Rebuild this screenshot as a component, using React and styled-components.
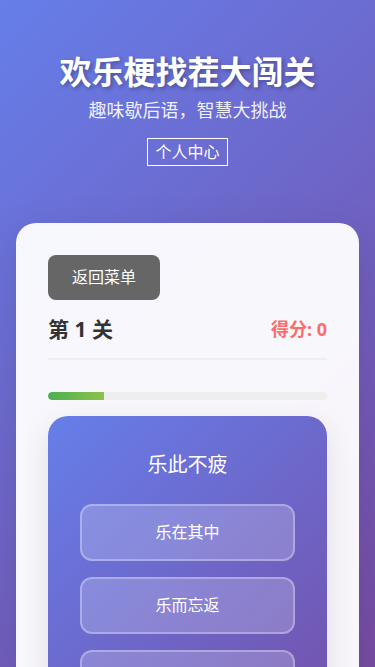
import React, { useState } from "react";
import styled, { createGlobalStyle } from "styled-components";

const GlobalStyle = createGlobalStyle`
  * { box-sizing: border-box; }
  html, body { margin: 0; padding: 0; }
  body {
    min-height: 100vh;
    font-family: "Noto Sans", "Noto Sans CJK SC", sans-serif;
    background: linear-gradient(135deg, #667eea 0%, #764ba2 100%);
    background-attachment: fixed;
  }
`;

const Page = styled.div`
  min-height: 100vh;
  padding: 0 16px 32px;
`;

const Header = styled.header`
  display: flex;
  flex-direction: column;
  align-items: center;
  padding-top: 52px;
  color: #fff;
  text-align: center;
`;

const Title = styled.h1`
  margin: 0;
  font-size: 32px;
  line-height: 40px;
  font-weight: 700;
  text-shadow: 2px 2px 4px rgba(0, 0, 0, 0.3);
`;

const Subtitle = styled.p`
  margin: 6px 0 0;
  font-size: 18px;
  line-height: 24px;
  opacity: 0.9;
`;

const ProfileButton = styled.button`
  margin-top: 16px;
  padding: 3px 7px;
  font-family: inherit;
  font-size: 16px;
  line-height: 20px;
  color: #fff;
  background: transparent;
  border: 1px solid #fff;
  cursor: pointer;
`;

const Card = styled.main`
  margin-top: 57px;
  padding: 32px;
  background: rgba(255, 255, 255, 0.95);
  border-radius: 20px;
  box-shadow: 0 10px 40px rgba(0, 0, 0, 0.1);
`;

const BackButton = styled.button`
  display: block;
  padding: 12px 24px;
  font-family: inherit;
  font-size: 16px;
  line-height: 21px;
  color: #fff;
  background: #666;
  border: none;
  border-radius: 8px;
  cursor: pointer;
`;

const InfoRow = styled.div`
  display: flex;
  justify-content: space-between;
  align-items: center;
  margin-top: 17px;
  padding-bottom: 17px;
  border-bottom: 2px solid #eee;
  line-height: 24px;
  font-weight: 700;
`;

const Level = styled.span`
  color: #333;
  font-size: 21px;
`;

const Score = styled.span`
  color: #ff6b6b;
  font-size: 18px;
`;

const Track = styled.div`
  margin-top: 32px;
  height: 8px;
  background: #eee;
  border-radius: 4px;
  overflow: hidden;
`;

const Fill = styled.div`
  height: 100%;
  background: linear-gradient(90deg, #4caf50, #8bc34a);
  border-radius: 4px 0 0 4px;
`;

const Question = styled.section`
  margin-top: 16px;
  padding: 32px;
  background: linear-gradient(135deg, #667eea 0%, #764ba2 100%);
  border-radius: 20px;
  box-shadow: 0 10px 30px rgba(0, 0, 0, 0.1);
  color: #fff;
`;

const Prompt = styled.h2`
  margin: 0;
  font-size: 20px;
  line-height: 34px;
  font-weight: 400;
  text-align: center;
`;

const Options = styled.div`
  display: flex;
  flex-direction: column;
  gap: 16px;
  margin-top: 22px;
`;

const Option = styled.button`
  width: 100%;
  padding: 16px;
  font-family: inherit;
  font-size: 16px;
  line-height: 21px;
  color: #fff;
  background: rgba(255, 255, 255, 0.2);
  border: 2px solid rgba(255, 255, 255, 0.3);
  border-radius: 12px;
  cursor: pointer;
`;

const options = ["乐在其中", "乐而忘返", "乐极生悲", "乐不思蜀"];

export default function App() {
  const [score] = useState(0);
  const progress = 20;

  return (
    <>
      <GlobalStyle />
      <Page>
        <Header>
          <Title>欢乐梗找茬大闯关</Title>
          <Subtitle>趣味歇后语，智慧大挑战</Subtitle>
          <ProfileButton>个人中心</ProfileButton>
        </Header>
        <Card>
          <BackButton>返回菜单</BackButton>
          <InfoRow>
            <Level>第 1 关</Level>
            <Score>得分: {score}</Score>
          </InfoRow>
          <Track>
            <Fill style={{ width: `${progress}%` }} />
          </Track>
          <Question>
            <Prompt>乐此不疲</Prompt>
            <Options>
              {options.map((o) => (
                <Option key={o}>{o}</Option>
              ))}
            </Options>
          </Question>
        </Card>
      </Page>
    </>
  );
}
